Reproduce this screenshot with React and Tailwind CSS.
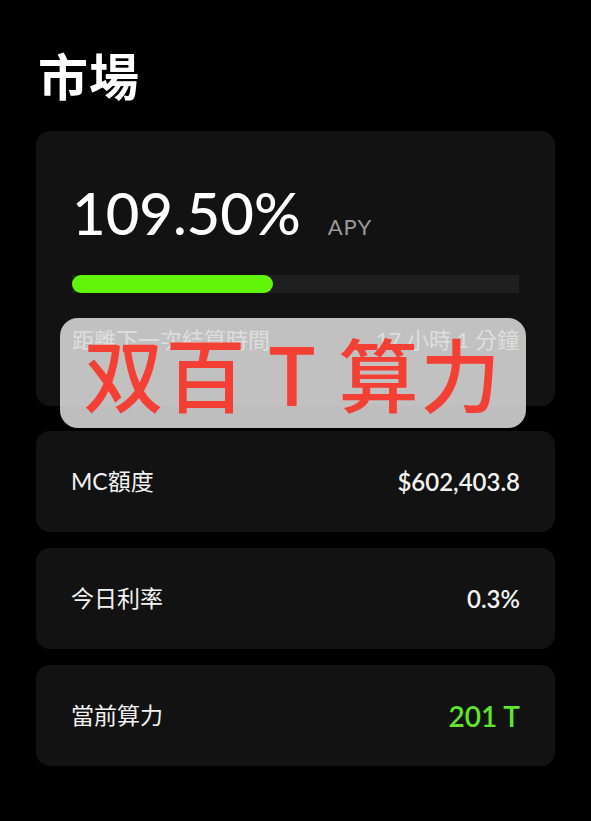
import React from 'react';

const rows = [
  { label: 'MC額度', value: '$602,403.8', green: false },
  { label: '今日利率', value: '0.3%', green: false },
  { label: '當前算力', value: '201 T', green: true },
];

const StatRow = ({ row }) => (
  <div className="h-[101px] rounded-[14px] bg-[#121212] px-[35px] flex items-center justify-between">
    <span className="text-[23px] text-[#f2f2f2]">{row.label}</span>
    <span className={row.green ? 'text-[28px] font-semibold text-[#5fe52e]' : 'text-[24px] font-semibold text-[#f2f2f2]'}>
      {row.value}
    </span>
  </div>
);

export default function App() {
  const progress = 45; // 已過時間百分比

  return (
    <div
      className="min-h-[821px] w-[591px] bg-black px-[36px] pt-[52px] relative overflow-hidden"
      style={{ fontFamily: 'Lato, "Noto Sans CJK TC", sans-serif' }}
    >
      <h1 className="text-[50px] leading-none font-bold text-white tracking-[1px] pl-[2px]">市場</h1>

      <div className="mt-[29px] flex flex-col gap-[16px]">
        {/* APY 卡片 */}
        <div className="rounded-[14px] bg-[#121212] px-[36px] pt-[53px] pb-[50px] mb-[9px]">
          <div className="flex items-baseline gap-[27px]">
            <span className="text-[58px] leading-none font-medium text-white">109.50%</span>
            <span className="text-[22px] text-[#9a9a9a] tracking-[1px]">APY</span>
          </div>
          <div className="mt-[32px] h-[18px] bg-[#1f1f1f]">
            <div className="h-full rounded-full bg-[#62f50a]" style={{ width: `${progress}%` }} />
          </div>
          <div className="mt-[30px] flex items-center justify-between text-[22px] text-[#a0a0a0]">
            <span>距離下一次結算時間</span>
            <span>17 小時 1 分鐘</span>
          </div>
        </div>

        {rows.map((row) => (
          <StatRow key={row.label} row={row} />
        ))}
      </div>

      {/* 水印 */}
      <div className="absolute left-[60px] top-[318px] w-[466px] h-[110px] rounded-[18px] bg-[#ededed]/80 flex items-center justify-center">
        <span
          className="text-[80px] leading-none font-medium text-[#f43f35] tracking-[2px] -mt-[4px]"
          style={{ fontFamily: '"Noto Sans CJK SC", sans-serif' }}
        >
          双百 T 算力
        </span>
      </div>
    </div>
  );
}
